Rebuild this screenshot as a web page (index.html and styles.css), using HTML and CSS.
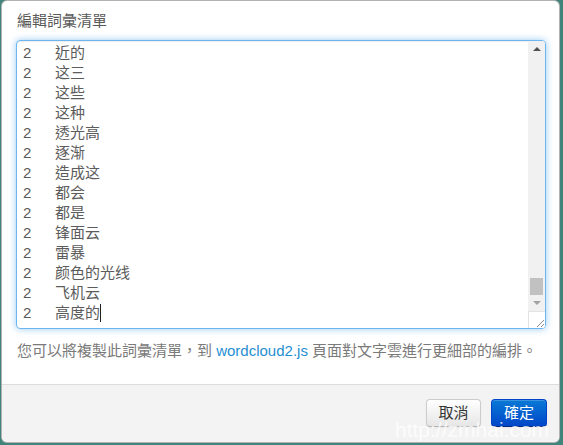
FILE: index.html
```html
<!DOCTYPE html>
<html lang="zh-Hant">
<head>
<meta charset="utf-8">
<title>編輯詞彙清單</title>
<link rel="stylesheet" href="styles.css">
</head>
<body>
<div class="modal">
  <div class="modal-body">
    <h3 class="title">編輯詞彙清單</h3>
    <div class="textarea">
      <div class="lines">
<div class="line">2	近的</div>
<div class="line">2	这三</div>
<div class="line">2	这些</div>
<div class="line">2	这种</div>
<div class="line">2	透光高</div>
<div class="line">2	逐渐</div>
<div class="line">2	造成这</div>
<div class="line">2	都会</div>
<div class="line">2	都是</div>
<div class="line">2	锋面云</div>
<div class="line">2	雷暴</div>
<div class="line">2	颜色的光线</div>
<div class="line">2	飞机云</div>
<div class="line">2	高度的<span class="caret"></span></div>
      </div>
      <div class="scrollbar">
        <div class="sb-btn sb-up"><span class="tri-up"></span></div>
        <div class="sb-track"><div class="sb-thumb"></div></div>
        <div class="sb-btn sb-down"><span class="tri-down"></span></div>
        <div class="sb-corner">
          <svg width="9" height="9" viewBox="0 0 9 9"><path d="M1 8 L8 1 M5 8 L8 5" stroke="#8a8a8a" stroke-width="1" fill="none"/></svg>
        </div>
      </div>
    </div>
    <p class="help">您可以將複製此詞彙清單，到 <a class="link" href="#">wordcloud2.js</a> 頁面對文字雲進行更細部的編排。</p>
  </div>
  <div class="modal-footer">
    <button class="btn">取消</button>
    <button class="btn btn-primary">確定</button>
  </div>
</div>
<div class="watermark">http://zmhai.com</div>
</body>
</html>
```

FILE: styles.css
```css
html, body {
  margin: 0;
  padding: 0;
}
body {
  width: 563px;
  height: 445px;
  overflow: hidden;
  background: #41847b;
  position: relative;
  font-family: "Liberation Sans", "Noto Sans CJK TC", sans-serif;
  font-size: 15px;
}
.modal {
  box-sizing: border-box;
  width: 559px;
  height: 443px;
  margin-left: 1px;
  background: #fff;
  border: 1px solid rgba(0, 0, 0, 0.3);
  border-radius: 6px;
  display: flex;
  flex-direction: column;
  overflow: hidden;
}
.modal-body {
  padding: 10px 0 0 14px;
  flex: 1;
}
.title {
  margin: 0 0 0 1px;
  font-size: 15px;
  font-weight: normal;
  line-height: 20px;
  color: #5a5a5a;
}
.textarea {
  box-sizing: border-box;
  margin-top: 9px;
  width: 530px;
  height: 289px;
  border: 1px solid rgba(82, 168, 236, 0.85);
  border-radius: 4px;
  box-shadow: inset 0 1px 1px rgba(0, 0, 0, 0.075), 0 0 7px rgba(82, 168, 236, 0.6);
  display: flex;
  overflow: hidden;
}
.lines {
  flex: 1;
  padding: 2px 6px 0 6px;
  color: #5c5c5c;
  line-height: 20px;
}
.line {
  white-space: pre;
  tab-size: 32px;
  -moz-tab-size: 32px;
  height: 20px;
}
.caret {
  display: inline-block;
  width: 1px;
  height: 18px;
  background: #222;
  vertical-align: -4px;
}
.scrollbar {
  width: 17px;
  display: flex;
  flex-direction: column;
  background: #f1f1f1;
}
.sb-btn {
  height: 16px;
  display: flex;
  align-items: center;
  justify-content: center;
}
.tri-up {
  width: 0;
  height: 0;
  border-left: 4px solid transparent;
  border-right: 4px solid transparent;
  border-bottom: 4px solid #505050;
}
.tri-down {
  width: 0;
  height: 0;
  border-left: 4px solid transparent;
  border-right: 4px solid transparent;
  border-top: 4px solid #a3a3a3;
}
.sb-track {
  flex: 1;
  display: flex;
  flex-direction: column;
  justify-content: flex-end;
  padding: 0 2px;
}
.sb-thumb {
  height: 17px;
  background: #c1c1c1;
}
.sb-corner {
  box-sizing: border-box;
  height: 17px;
  background: #fff;
  border-top: 1px solid #e3e3e3;
  border-left: 1px solid #e3e3e3;
  display: flex;
  align-items: flex-end;
  justify-content: flex-end;
}
.sb-corner svg {
  display: block;
}
.help {
  margin: 12px 0 0 1px;
  line-height: 20px;
  color: #7a7a7a;
}
.link {
  color: #1f8fd2;
  text-decoration: none;
}
.modal-footer {
  height: 58px;
  box-sizing: border-box;
  border-top: 1px solid #ddd;
  background: #f3f3f3;
  padding: 14px 12px 0 0;
  display: flex;
  justify-content: flex-end;
  gap: 10px;
}
.btn {
  box-sizing: border-box;
  height: 28px;
  width: 55px;
  padding: 0;
  white-space: nowrap;
  font-family: "Liberation Sans", "Noto Sans CJK TC", sans-serif;
  font-size: 15px;
  line-height: 26px;
  color: #333;
  border: 1px solid #ccc;
  border-bottom-color: #b3b3b3;
  border-radius: 4px;
  background: linear-gradient(#ffffff, #e6e6e6);
  box-shadow: inset 0 1px 0 rgba(255, 255, 255, 0.2), 0 1px 2px rgba(0, 0, 0, 0.05);
}
.btn-primary {
  width: 56px;
  color: #fff;
  border-color: #0044cc #0044cc #002a80;
  background: linear-gradient(#0a79d6, #0047c8);
}
.watermark {
  position: absolute;
  left: 395px;
  top: 418px;
  font-family: "Liberation Sans", sans-serif;
  font-size: 21px;
  line-height: 24px;
  color: rgba(255, 255, 255, 0.75);
  white-space: nowrap;
}
```
